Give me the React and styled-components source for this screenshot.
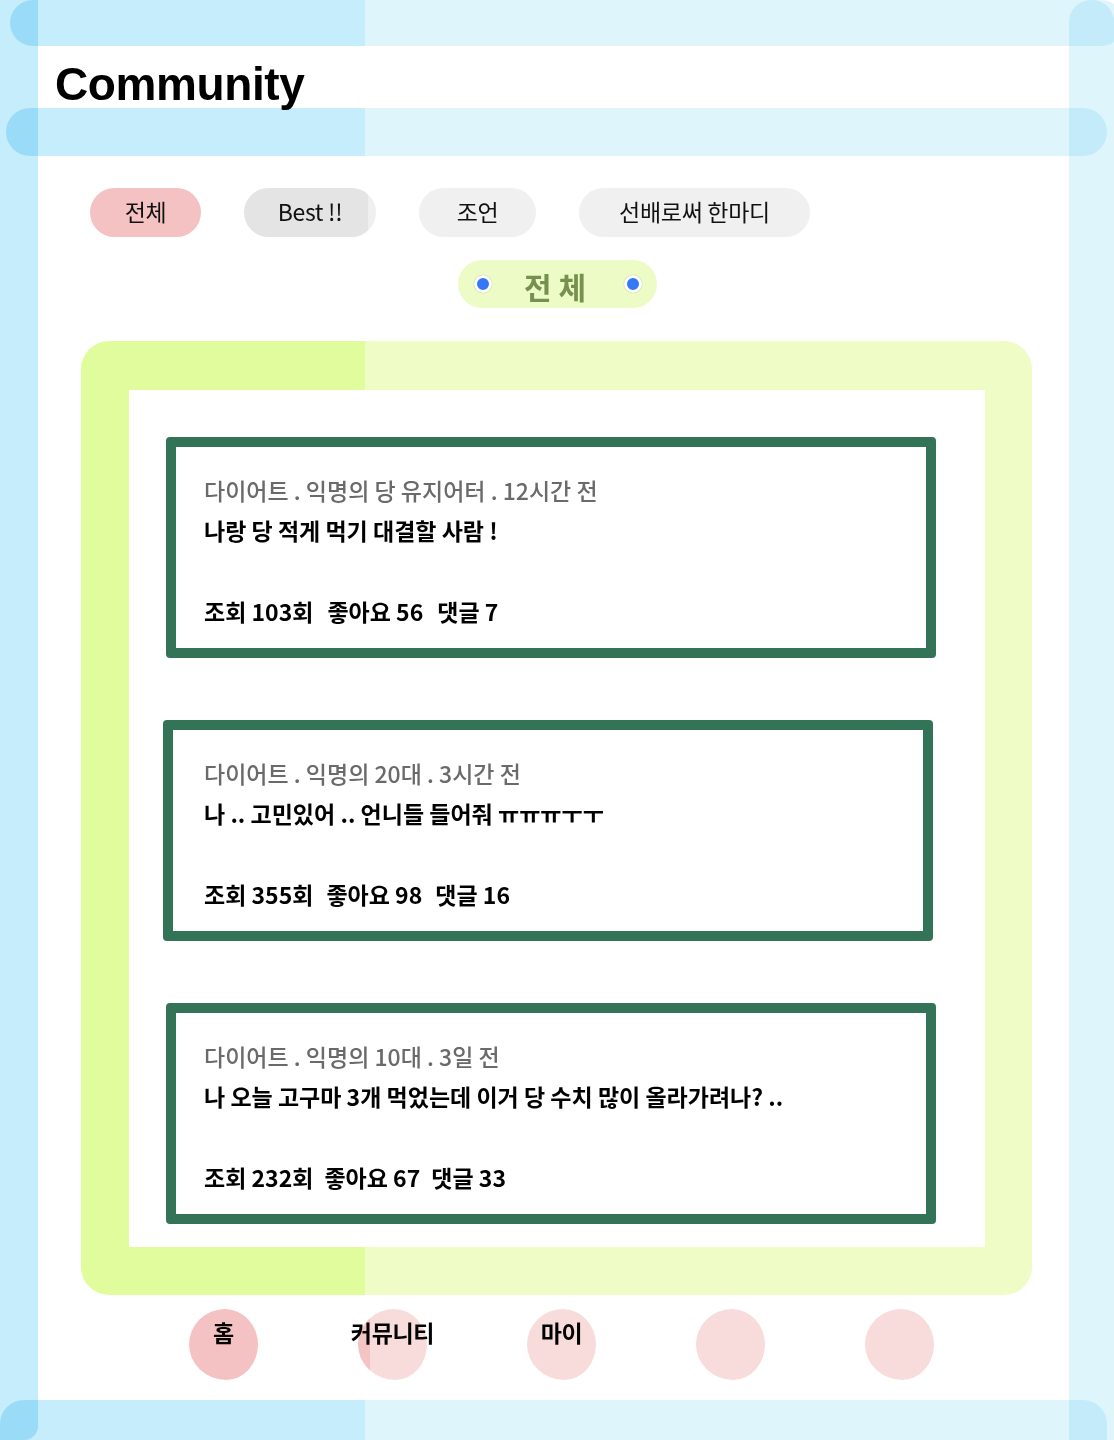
import React from "react";
import styled, { createGlobalStyle } from "styled-components";

const GlobalStyle = createGlobalStyle`
  html, body { margin: 0; padding: 0; background: #ffffff; }
  body { font-family: "Noto Sans CJK KR", "Noto Sans", sans-serif; }
  * { box-sizing: border-box; }
`;

const KR = `"Noto Sans CJK KR", "Noto Sans", sans-serif`;

const Page = styled.div`
  position: relative;
  width: 1114px;
  height: 1440px;
  overflow: hidden;
  background: #ffffff;
  display: grid;
  grid-template-columns: 38px 1fr 45px;
  grid-template-rows: 46px 62px 48px 1fr 40px;
`;

const Strip = styled.div`
  grid-row: 1 / -1;
  grid-column: ${(p) => (p.$side === "left" ? "1" : "3")};
  background: ${(p) => (p.$side === "left" ? "#c6edfb" : "#dff5fc")};
  border-radius: ${(p) => (p.$side === "left" ? "0 0 14px 0" : "22px 22px 0 0")};
  mix-blend-mode: multiply;
`;

const Band = styled.div`
  grid-row: ${(p) => p.$row};
  grid-column: 1 / -1;
  margin-left: ${(p) => p.$left}px;
  margin-right: ${(p) => p.$right}px;
  border-radius: ${(p) => p.$radius || "24px"};
  background: linear-gradient(
    to right,
    #c6edfb ${(p) => 365 - p.$left}px,
    #dff5fc ${(p) => 365 - p.$left}px
  );
  mix-blend-mode: multiply;
`;

const TitleRow = styled.header`
  grid-row: 2;
  grid-column: 2;
  padding: 15px 0 0 17px;
`;

const Title = styled.h1`
  margin: 0;
  font-family: "Liberation Sans", Arial, sans-serif;
  font-weight: 700;
  font-size: 46px;
  line-height: 46px;
  letter-spacing: -0.4px;
  color: #000;
`;

const Main = styled.main`
  grid-row: 4;
  grid-column: 2;
  display: flex;
  flex-direction: column;
  padding-top: 32px;
`;

const Tabs = styled.nav`
  display: flex;
  align-items: center;
  gap: 43px;
  padding-left: 52px;
`;

const Tab = styled.button`
  all: unset;
  box-sizing: border-box;
  display: flex;
  align-items: center;
  justify-content: center;
  width: ${(p) => p.$w}px;
  height: 49px;
  padding-bottom: 4px;
  border-radius: 25px;
  font-family: ${KR};
  font-size: 23px;
  letter-spacing: -0.3px;
  color: #111;
  background: ${(p) =>
    p.$active
      ? "#f4c2c2"
      : p.$tone === "mid"
      ? "linear-gradient(to right, #e4e4e4 calc(100% - 8px), #efefef calc(100% - 8px))"
      : "#f0f0f0"};
`;

const Heading = styled.div`
  align-self: center;
  margin-top: 23px;
  margin-left: 8px;
  width: 199px;
  height: 48px;
  border-radius: 24px;
  background: #edfcc6;
  display: flex;
  align-items: center;
  justify-content: space-between;
  padding: 0 15px 0 16px;
`;

const Dot = styled.span`
  width: 18px;
  height: 18px;
  border-radius: 50%;
  background: #3478f6;
  border: 3px solid #ffffff;
  box-shadow: 0 0 1px rgba(0, 0, 0, 0.35);
`;

const HeadingText = styled.span`
  font-family: ${KR};
  font-weight: 700;
  font-size: 30px;
  line-height: 1;
  color: #76914f;
  letter-spacing: 0;
  margin-right: 6px;
  margin-top: 4px;
`;

const Frame = styled.section`
  margin: 33px 0 0 43px;
  width: 951px;
  padding: 49px 47px 48px 48px;
  border-radius: 28px;
  background: linear-gradient(to right, #e0fc9c 284px, #effcc6 284px);
`;

const Board = styled.div`
  background: #ffffff;
  display: flex;
  flex-direction: column;
  gap: 62px;
  padding: 47px 0 23px 37px;
`;

const Card = styled.article`
  width: 770px;
  margin-left: ${(p) => p.$shift || 0}px;
  border: 10px solid #337358;
  border-radius: 4px;
  padding: 23px 20px 17px ${(p) => 28 - (p.$shift || 0)}px;
  font-family: ${KR};
  font-size: 23px;
  line-height: 40px;
  letter-spacing: 0;
`;

const Meta = styled.div`
  color: #6a6a6a;
  font-weight: 500;
`;

const PostTitle = styled.div`
  color: #000;
  font-weight: 700;
`;

const Stats = styled.div`
  margin-top: 41px;
  display: flex;
  gap: ${(p) => p.$gap || 14}px;
  color: #000;
  font-weight: 700;
`;

const BottomNav = styled.nav`
  display: flex;
  align-items: center;
  gap: 100px;
  padding-left: 151px;
  margin-top: 14px;
`;

const NavBlob = styled.div`
  width: 69px;
  height: 71px;
  border-radius: 52% 48% 46% 54% / 50% 50% 50% 50%;
  background: ${(p) =>
    p.$active
      ? "#f4c2c2"
      : p.$edge
      ? "linear-gradient(to right, #f4c4c4 12px, #f8dcdc 12px)"
      : "#f8dcdc"};
  display: flex;
  justify-content: center;
  align-items: flex-start;
  padding-top: 8px;
`;

const NavLabel = styled.span`
  font-family: ${KR};
  font-weight: 700;
  font-size: 23px;
  line-height: 30px;
  color: #000;
  white-space: nowrap;
  letter-spacing: -0.3px;
`;

const tabs = [
  { label: "전체", w: 111, active: true },
  { label: "Best !!", w: 132, tone: "mid" },
  { label: "조언", w: 117 },
  { label: "선배로써 한마디", w: 231 },
];

const posts = [
  {
    meta: "다이어트 . 익명의 당 유지어터 . 12시간 전",
    title: "나랑 당 적게 먹기 대결할 사람 !",
    stats: ["조회 103회", "좋아요 56", "댓글 7"],
    gap: 14,
  },
  {
    meta: "다이어트 . 익명의 20대 . 3시간 전",
    title: "나 .. 고민있어 .. 언니들 들어줘 ㅠㅠㅠㅜㅜ",
    stats: ["조회 355회", "좋아요 98", "댓글 16"],
    gap: 13,
    shift: -3,
  },
  {
    meta: "다이어트 . 익명의 10대 . 3일 전",
    title: "나 오늘 고구마 3개 먹었는데 이거 당 수치 많이 올라가려나? ..",
    stats: ["조회 232회", "좋아요 67", "댓글 33"],
    gap: 11,
  },
];

const navItems = [
  { label: "홈", active: true },
  { label: "커뮤니티", edge: true },
  { label: "마이" },
  { label: "" },
  { label: "" },
];

export default function App() {
  return (
    <>
      <GlobalStyle />
      <Page>
        <Strip $side="left" />
        <Strip $side="right" />
        <Band $row={1} $left={10} $right={-10} />
        <Band $row={3} $left={6} $right={7} />
        <Band $row={5} $left={0} $right={7} $radius="24px 24px 0 0" />

        <TitleRow>
          <Title>Community</Title>
        </TitleRow>

        <Main>
          <Tabs>
            {tabs.map((t) => (
              <Tab key={t.label} $w={t.w} $active={t.active} $tone={t.tone}>
                {t.label}
              </Tab>
            ))}
          </Tabs>

          <Heading>
            <Dot />
            <HeadingText>전 체</HeadingText>
            <Dot />
          </Heading>

          <Frame>
            <Board>
              {posts.map((p) => (
                <Card key={p.meta} $shift={p.shift}>
                  <Meta>{p.meta}</Meta>
                  <PostTitle>{p.title}</PostTitle>
                  <Stats $gap={p.gap}>
                    {p.stats.map((s) => (
                      <span key={s}>{s}</span>
                    ))}
                  </Stats>
                </Card>
              ))}
            </Board>
          </Frame>

          <BottomNav>
            {navItems.map((n, i) => (
              <NavBlob key={i} $active={n.active} $edge={n.edge}>
                {n.label && <NavLabel>{n.label}</NavLabel>}
              </NavBlob>
            ))}
          </BottomNav>
        </Main>
      </Page>
    </>
  );
}
